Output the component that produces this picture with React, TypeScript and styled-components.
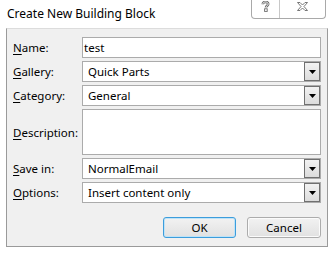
import React from 'react';
import styled, { createGlobalStyle } from 'styled-components';

const GlobalStyle = createGlobalStyle`
  html, body {
    margin: 0;
    padding: 0;
    background: #ffffff;
  }
  body {
    font-family: 'Noto Sans', 'DejaVu Sans', sans-serif;
    font-size: 11.5px;
    color: #000000;
  }
`;

const fields = [
  { key: 'N', rest: 'ame:', value: 'test', kind: 'text' },
  { key: 'G', rest: 'allery:', value: 'Quick Parts', kind: 'combo' },
  { key: 'C', rest: 'ategory:', value: 'General', kind: 'combo' },
  { key: 'D', rest: 'escription:', value: '', kind: 'area' },
  { key: 'S', rest: 'ave in:', value: 'NormalEmail', kind: 'combo' },
  { key: 'O', rest: 'ptions:', value: 'Insert content only', kind: 'combo' },
];

const HelpIcon = () => (
  <svg width="9" height="11" viewBox="0 0 9 11">
    <path
      d="M1.8 3.2 C1.8 1.6 3 1 4.5 1 C6 1 7.2 1.7 7.2 3.1 C7.2 4.6 5 4.8 5 6.5"
      fill="none"
      stroke="#6a6a6a"
      strokeWidth="2.6"
    />
    <path
      d="M1.8 3.2 C1.8 1.6 3 1 4.5 1 C6 1 7.2 1.7 7.2 3.1 C7.2 4.6 5 4.8 5 6.5"
      fill="none"
      stroke="#ffffff"
      strokeWidth="0.9"
    />
    <rect x="3.6" y="7.8" width="2.6" height="2.6" fill="#ffffff" stroke="#6a6a6a" strokeWidth="0.9" />
  </svg>
);

const CloseIcon = () => (
  <svg width="11" height="9" viewBox="0 0 11 9">
    <polygon
      points="0.5,0.5 3,0.5 5.5,3 8,0.5 10.5,0.5 7,4.5 10.5,8.5 8,8.5 5.5,6 3,8.5 0.5,8.5 4,4.5"
      fill="#ffffff"
      stroke="#6a6a6a"
      strokeWidth="0.9"
      strokeLinejoin="miter"
    />
  </svg>
);

const ArrowIcon = () => (
  <svg width="7" height="4" viewBox="0 0 7 4">
    <polygon points="0,0 7,0 3.5,4" fill="#000000" />
  </svg>
);

const App = () => {
  return (
    <>
      <GlobalStyle />
      <Window>
        <TitleBar>
          <Title>Create New Building Block</Title>
          <CaptionGroup>
            <CaptionButton $width={28}>
              <HelpIcon />
            </CaptionButton>
            <CaptionButton $width={45} $last>
              <CloseIcon />
            </CaptionButton>
          </CaptionGroup>
        </TitleBar>

        <Client>
          <Form>
            {fields.map(field => (
              <React.Fragment key={field.key}>
                <Label>
                  <u>{field.key}</u>
                  {field.rest}
                </Label>
                <Field $tall={field.kind === 'area'}>
                  <FieldText $inset={field.kind === 'combo' ? 5 : 1}>{field.value}</FieldText>
                  {field.kind === 'combo' && (
                    <DropButton>
                      <ArrowIcon />
                    </DropButton>
                  )}
                </Field>
              </React.Fragment>
            ))}
          </Form>

          <ButtonRow>
            <PushButton $default $width={73}>
              OK
            </PushButton>
            <PushButton $width={74}>Cancel</PushButton>
          </ButtonRow>
        </Client>
      </Window>
    </>
  );
};

const Window = styled.div`
  width: 329px;
  height: 253px;
  display: flex;
  flex-direction: column;
  background: #ffffff;
  overflow: hidden;
`;

const TitleBar = styled.div`
  height: 28px;
  display: flex;
  align-items: flex-start;
`;

const Title = styled.div`
  padding: 6px 0 0 7px;
  font-size: 12px;
  line-height: 16px;
  color: #000000;
`;

const CaptionGroup = styled.div`
  margin-left: auto;
  margin-right: 3px;
  display: flex;
  height: 18px;
  border: 1px solid #a9a9a9;
  border-top: none;
  border-radius: 0 0 4px 4px;
  background: #ffffff;
`;

const CaptionButton = styled.div<{ $width: number; $last?: boolean }>`
  width: ${p => p.$width}px;
  display: flex;
  align-items: center;
  justify-content: center;
  padding-bottom: 5px;
  box-sizing: border-box;
  border-right: ${p => (p.$last ? 'none' : '1px solid #c8c8c8')};
`;

const Client = styled.div`
  margin-left: 6px;
  width: 322px;
  height: 219px;
  box-sizing: border-box;
  background: #f0f0f0;
  border: 1px solid #9a9a9a;
  border-top-color: #dcdcdc;
  padding: 8px 6px 8px 6px;
  display: flex;
  flex-direction: column;
`;

const Form = styled.div`
  display: grid;
  grid-template-columns: 69px 1fr;
  row-gap: 3px;
`;

const Label = styled.div`
  display: flex;
  align-items: center;
  font-size: 11.5px;
  color: #000000;

  u {
    text-decoration-thickness: 1px;
    text-underline-offset: 2px;
  }
`;

const Field = styled.div<{ $tall?: boolean }>`
  height: ${p => (p.$tall ? 46 : 21)}px;
  box-sizing: border-box;
  display: flex;
  align-items: center;
  background: #ffffff;
  border: 1px solid #ababab;
`;

const FieldText = styled.span<{ $inset: number }>`
  flex: 1;
  padding-left: ${p => p.$inset}px;
  font-size: 11.5px;
  white-space: nowrap;
  overflow: hidden;
`;

const DropButton = styled.div`
  width: 16px;
  height: 100%;
  box-sizing: border-box;
  display: flex;
  align-items: center;
  justify-content: center;
  border: 1px solid #707070;
  background: linear-gradient(#f2f2f2, #dcdcdc);
`;

const ButtonRow = styled.div`
  margin-top: 14px;
  display: flex;
  justify-content: flex-end;
  gap: 11px;
`;

const PushButton = styled.div<{ $default?: boolean; $width: number }>`
  width: ${p => p.$width}px;
  height: 21px;
  box-sizing: border-box;
  display: flex;
  align-items: center;
  justify-content: center;
  font-size: 11.5px;
  border-radius: 3px;
  border: 1px solid ${p => (p.$default ? '#3c9ddc' : '#acacac')};
  box-shadow: ${p => (p.$default ? 'inset 0 0 0 1px #bfe3f7' : 'inset 0 0 0 1px #fbfbfb')};
  background: linear-gradient(#f2f2f2, #e1e1e1);
`;

export default App;
